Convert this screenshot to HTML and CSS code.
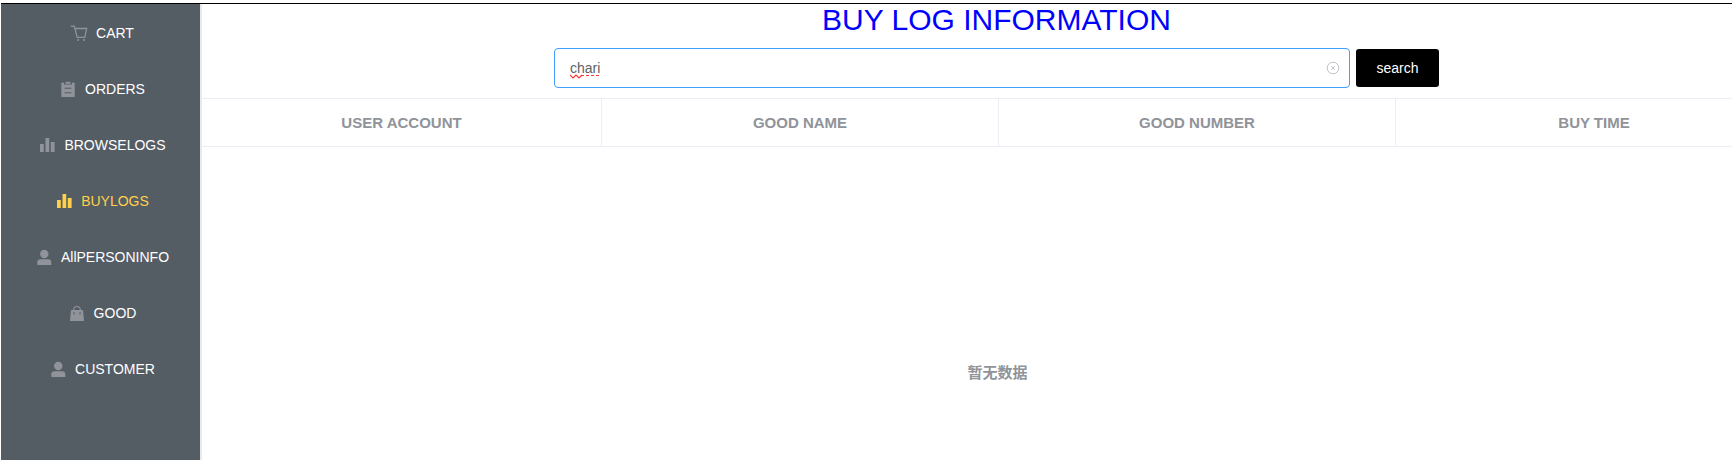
FILE: index.html
```html
<!DOCTYPE html>
<html lang="en">
<head>
<meta charset="utf-8">
<title>Buy logs</title>
<link rel="stylesheet" href="styles.css">
</head>
<body>
<svg class="defs" aria-hidden="true">
  <symbol id="cart" viewBox="0 0 24 18"><path d="M3.7 2.2H7.3L10.2 13.3H17.8L19.7 4.5H8" fill="none" stroke="currentColor" stroke-width="1.3"/><circle cx="11.2" cy="16" r="1"/><circle cx="17" cy="16" r="1"/></symbol>
  <symbol id="order" viewBox="0 0 24 18"><path d="M5.3 2.8H8V4.5H16V2.8H18.7V17H5.3Z"/><path d="M9.5 1.8H14.5V3.8H9.5Z"/><path d="M8.5 8.2H15.5M8.5 12.8H15.5" stroke="#545c64" stroke-width="1"/></symbol>
  <symbol id="bars" viewBox="0 0 24 18"><path d="M5 8H8.8V16H5ZM10.5 2H14.2V16H10.5ZM15.8 6H19.6V16H15.8Z"/></symbol>
  <symbol id="user" viewBox="0 0 24 18"><circle cx="12.3" cy="6" r="4.2"/><path d="M5.3 17V14.5Q5.3 11.2 8.6 11.2H16Q19.3 11.2 19.3 14.5V17Z"/></symbol>
  <symbol id="bag" viewBox="0 0 24 18"><path d="M6 6H18L19 17H5Z"/><path d="M8.7 6Q8.7 2.5 12 2.5T15.3 6" fill="none" stroke="currentColor" stroke-width="1.1"/><path d="M9 8V10.5M15 8V10.5" stroke="#545c64" stroke-width="1"/></symbol>
</svg>
<div class="app">
  <nav class="menu">
    <a class="menu-item"><svg class="icon"><use href="#cart"/></svg><span>CART</span></a>
    <a class="menu-item"><svg class="icon"><use href="#order"/></svg><span>ORDERS</span></a>
    <a class="menu-item"><svg class="icon"><use href="#bars"/></svg><span>BROWSELOGS</span></a>
    <a class="menu-item active"><svg class="icon"><use href="#bars"/></svg><span>BUYLOGS</span></a>
    <a class="menu-item"><svg class="icon"><use href="#user"/></svg><span>AllPERSONINFO</span></a>
    <a class="menu-item"><svg class="icon"><use href="#bag"/></svg><span>GOOD</span></a>
    <a class="menu-item"><svg class="icon"><use href="#user"/></svg><span>CUSTOMER</span></a>
  </nav>
  <main class="main">
    <h1 class="title">BUY LOG INFORMATION</h1>
    <div class="search">
      <div class="field">
        <span class="value">chari<svg class="spell" viewBox="0 0 31 5"><path d="M0 1L3 4L6 1L9 4L12 1" fill="none" stroke="#f33" stroke-width="1.2"/><path d="M11 1.5H31" stroke="#f33" stroke-dasharray="3 2"/></svg></span>
        <svg class="clear" viewBox="0 0 14 14"><circle cx="7" cy="7" r="5.8"/><path d="M5.2 5.2L8.8 8.8M8.8 5.2L5.2 8.8"/></svg>
      </div>
      <button class="button">search</button>
    </div>
    <div class="table">
      <div class="head">
        <div class="cell">USER ACCOUNT</div>
        <div class="cell">GOOD NAME</div>
        <div class="cell">GOOD NUMBER</div>
        <div class="cell">BUY TIME</div>
      </div>
      <div class="empty">暂无数据</div>
    </div>
  </main>
</div>
</body>
</html>
```
FILE: styles.css
```css
* { box-sizing: border-box; }
body {
  margin: 0;
  height: 460px;
  overflow: hidden;
  background: #fff;
  font: 14px "Liberation Sans", "Noto Sans CJK SC", sans-serif;
}
.defs { display: none; }
.app {
  display: flex;
  height: 457px;
  margin: 3px 0 0 1px;
  border-top: 1px solid #000;
}
.menu {
  flex: none;
  width: 201px;
  padding-top: 1px;
  background: #545c64;
  border-right: 2px solid #e9e9ed;
}
.menu-item {
  display: flex;
  align-items: center;
  justify-content: center;
  gap: 5px;
  height: 56px;
  color: #fff;
}
.icon {
  width: 24px;
  height: 18px;
  color: #909399;
  fill: currentColor;
}
.active, .active .icon { color: #ffd04b; }
.main { flex: 1; min-width: 0; overflow: hidden; }
.title {
  margin: 0;
  height: 44px;
  padding: 1px 0 0 59px;
  color: #00f;
  font-size: 30px;
  font-weight: 400;
  line-height: 30px;
  text-align: center;
}
.search {
  display: flex;
  align-items: center;
  gap: 6px;
  height: 40px;
  margin-left: 352px;
}
.field {
  display: flex;
  align-items: center;
  justify-content: space-between;
  width: 796px;
  height: 40px;
  padding: 0 9px 0 15px;
  border: 1px solid #409eff;
  border-radius: 4px;
  color: #606266;
}
.value { position: relative; }
.spell {
  position: absolute;
  left: 0;
  top: 14px;
  width: 31px;
  height: 5px;
}
.clear {
  width: 14px;
  height: 14px;
  fill: none;
  stroke: #c0c4cc;
}
.button {
  width: 83px;
  height: 38px;
  padding: 0;
  border: 0;
  border-radius: 3px;
  background: #000;
  color: #fff;
  font: inherit;
}
.table {
  width: 1592px;
  margin-top: 10px;
  color: #909399;
  font-size: 15px;
  font-weight: 700;
}
.head {
  display: grid;
  grid-template-columns: 400px repeat(3, 397px);
  height: 49px;
  border: solid #ebeef5;
  border-width: 1px 0;
}
.cell {
  display: flex;
  align-items: center;
  justify-content: center;
  border-right: 1px solid #ebeef5;
}
.empty {
  padding: 215px 1px 0 0;
  line-height: 22px;
  text-align: center;
}
```
